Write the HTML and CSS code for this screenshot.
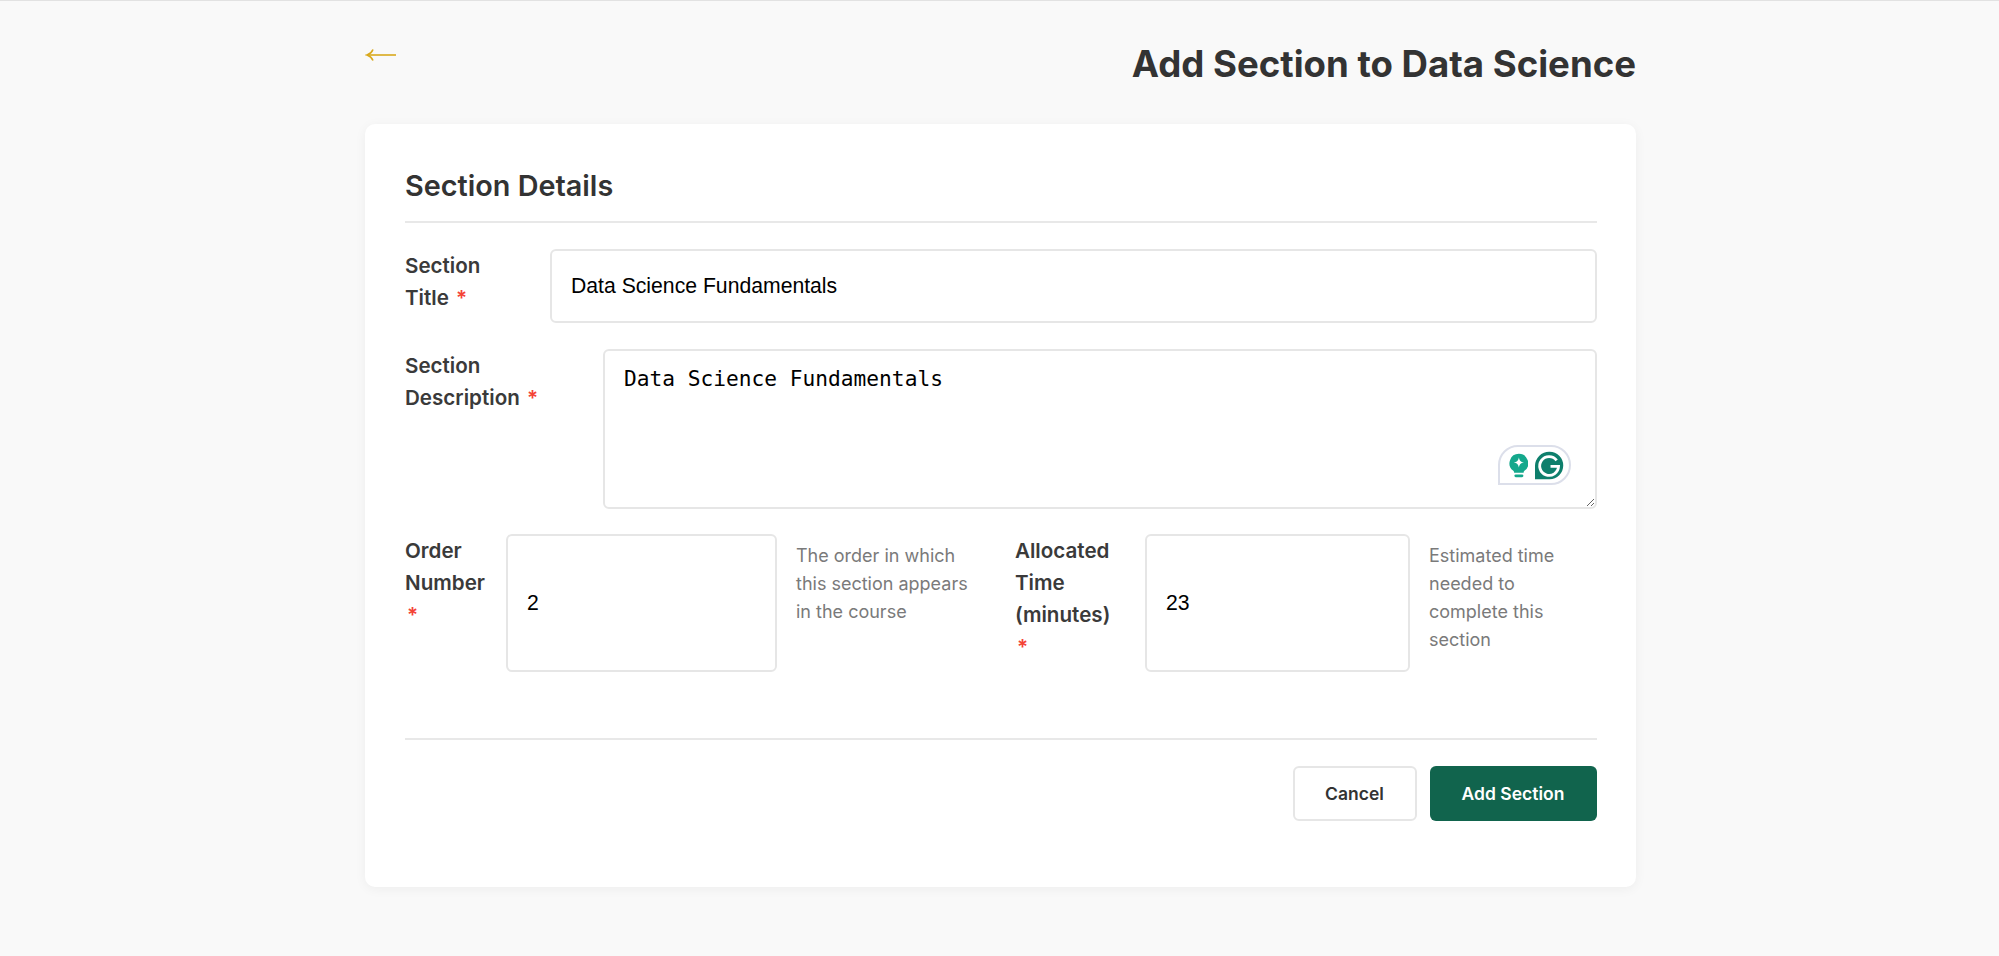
FILE: index.html
```html
<!DOCTYPE html>
<html lang="en">
<head>
  <meta charset="UTF-8" />
  <meta name="viewport" content="width=device-width, initial-scale=1.0" />
  <title>Add Section</title>
  <link rel="stylesheet" href="styles.css">
</head>
<body>
  <div class="container">
    <header class="page-header">
      <a class="back-link" href="#" aria-label="Back">
        <svg width="33" height="14" viewBox="0 0 33 14" fill="none" stroke="currentColor" stroke-width="1.6">
          <path d="M3 7H31" />
          <path d="M8 1.5C7 4 5 6 2 7C5 8 7 10 8 12.5" />
        </svg>
      </a>
      <h1>Add Section to Data Science</h1>
    </header>

    <form class="card">
      <h2 class="card-title">Section Details</h2>

      <div class="form-group">
        <label class="label label-title">Section<br>Title <span class="req">*</span></label>
        <input class="field" type="text" value="Data Science Fundamentals" />
      </div>

      <div class="form-group">
        <label class="label label-desc">Section<br>Description <span class="req">*</span></label>
        <div class="textarea-wrap">
          <textarea class="field field-area">Data Science Fundamentals</textarea>
          <div class="grammarly">
            <svg width="21" height="25" viewBox="0 0 22 26">
              <path fill="#14a88c" d="M11 0a10.5 10.5 0 0 1 6.5 18.7c-.9.7-1.2 1.3-1.2 2.3H5.700c0-1-.3-1.600-1.200-2.300A10.500 10.500 0 0 1 11 0z" />
              <path fill="#fff" d="M11 4c.7 3.600 2 4.900 5.600 5.600-3.600.7-4.900 2-5.600 5.600-.7-3.600-2-4.900-5.600-5.600 3.600-.7 4.900-2 5.600-5.600z" />
              <rect fill="#14a88c" x="6" y="23" width="10" height="3" rx="1.500" />
            </svg>
            <svg width="30" height="29" viewBox="0 0 30 29">
              <path fill="#0e7f6c" d="M15.500 0a14.500 14.500 0 0 1 0 29H0V15.500A15 15 0 0 1 15.500 0z" />
              <path fill="none" stroke="#fff" stroke-width="3" d="M23 9a10 10 0 1 0 2 6.500h-8.500" />
            </svg>
          </div>
        </div>
      </div>

      <div class="form-row">
        <div class="form-col col-order">
          <label class="label label-order">Order Number<br><span class="req">*</span></label>
          <input class="field field-tall input-order" type="number" value="2" />
          <p class="hint hint-order">The order in which this section appears in the course</p>
        </div>
        <div class="form-col col-time">
          <label class="label label-time">Allocated Time (minutes)<br><span class="req">*</span></label>
          <input class="field field-tall input-time" type="number" value="23" />
          <p class="hint hint-time">Estimated time needed to complete this section</p>
        </div>
      </div>

      <div class="form-actions">
        <button type="button" class="btn btn-cancel">Cancel</button>
        <button type="submit" class="btn btn-primary">Add Section</button>
      </div>
    </form>
  </div>
</body>
</html>
```

FILE: styles.css
```css
* {
  margin: 0;
  padding: 0;
  box-sizing: border-box;
}
body {
  background-color: #f9f9f9;
  border-top: 1px solid #e2e2e2;
  color: #333;
  font-family: 'Inter', sans-serif;
  font-size: 20px;
}
.container {
  width: 1271px;
  margin: 0 363px 0 365px;
  padding-bottom: 69px;
}
.page-header {
  display: flex;
  justify-content: space-between;
  align-items: flex-start;
  height: 123px;
  padding-top: 41px;
}
.back-link {
  color: #d9a91c;
  display: block;
  line-height: 0;
  margin-top: 6px;
}
.page-header h1 {
  font-size: 36.6px;
  font-weight: 700;
  line-height: 44px;
}
.card {
  background: #fff;
  border-radius: 10px;
  box-shadow: 0 2px 12px rgba(0, 0, 0, 0.05);
  padding: 40px 39.5px 40px 40px;
  height: 763px;
}
.card-title {
  border-bottom: 2px solid #e8e8e8;
  font-size: 28.8px;
  font-weight: 600;
  line-height: 44px;
  padding-bottom: 13px;
  margin-bottom: 26px;
}
.form-group {
  display: flex;
  gap: 20px;
  margin-bottom: 26px;
}
.form-group:nth-of-type(2) {
  margin-bottom: 25px;
}
.label {
  flex: none;
  font-size: 20.6px;
  font-weight: 600;
  line-height: 32px;
  color: #3a3a3a;
  padding-top: 1px;
}
.label-title { width: 125px; }
.label-desc { width: 178px; }
.label-order { width: 81px; }
.label-time { width: 110px; }
.req {
  color: #f44336;
  margin-left: 2px;
}
.field {
  background: #fff;
  border: 2px solid #e6e6e6;
  border-radius: 6px;
  color: #000;
  flex: 1;
  font-family: 'Liberation Sans', sans-serif;
  font-size: 21.2px;
  height: 74px;
  min-width: 0;
  outline: none;
  padding: 0 19px;
  width: 100%;
}
.textarea-wrap {
  flex: 1;
  position: relative;
}
.field-area {
  display: block;
  font-family: 'DejaVu Sans Mono', monospace;
  font-size: 21.2px;
  height: 160px;
  line-height: 28px;
  padding: 14px 19px;
  resize: vertical;
}
.grammarly {
  align-items: center;
  background: #fff;
  border: 2px solid #dcdfea;
  border-radius: 20px 20px 20px 0;
  display: flex;
  gap: 7px;
  height: 40px;
  justify-content: flex-end;
  padding: 0 5px 0 9px;
  position: absolute;
  right: 26px;
  top: 96px;
  width: 73px;
}
.form-row {
  display: flex;
  gap: 20px;
}
.form-col {
  display: flex;
  gap: 20px;
}
.col-order { width: 590px; }
.col-time { width: 581px; }
.field-tall {
  flex: none;
  height: 138px;
}
.input-order { width: 271px; }
.input-time { width: 265px; }
.hint {
  color: #7a7a7a;
  flex: 1;
  font-size: 18px;
  line-height: 28px;
  padding-top: 8px;
}
.hint-order { max-width: 180px; margin-left: -1px; }
.hint-time { max-width: 150px; margin-left: -1px; }
.form-actions {
  border-top: 2px solid #e8e8e8;
  display: flex;
  gap: 13px;
  justify-content: flex-end;
  margin-top: 66px;
  padding-top: 26px;
}
.btn {
  border-radius: 6px;
  cursor: pointer;
  font-family: 'Inter', sans-serif;
  font-size: 17.5px;
  font-weight: 600;
  height: 55px;
}
.btn-cancel {
  background: #fff;
  border: 2px solid #e6e6e6;
  color: #333;
  width: 124px;
}
.btn-primary {
  background: #11644d;
  border: none;
  color: #fff;
  width: 167px;
}
```
